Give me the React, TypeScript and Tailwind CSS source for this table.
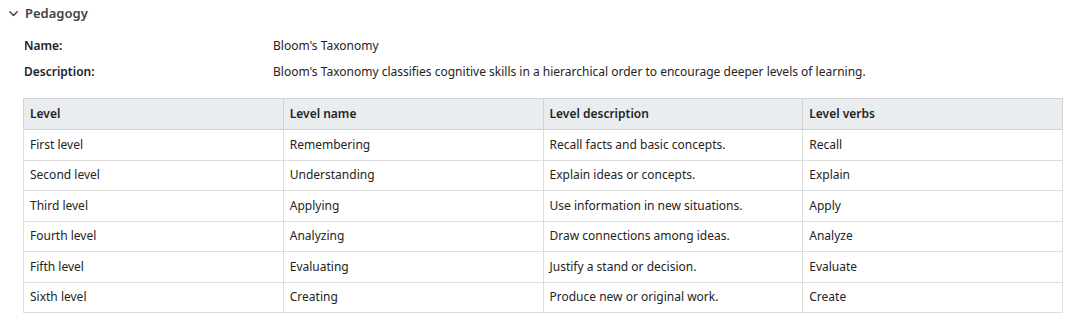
import React from "react";

type Row = {
  level: string;
  name: string;
  description: string;
  verbs: string;
};

const rows: Row[] = [
  { level: "First level", name: "Remembering", description: "Recall facts and basic concepts.", verbs: "Recall" },
  { level: "Second level", name: "Understanding", description: "Explain ideas or concepts.", verbs: "Explain" },
  { level: "Third level", name: "Applying", description: "Use information in new situations.", verbs: "Apply" },
  { level: "Fourth level", name: "Analyzing", description: "Draw connections among ideas.", verbs: "Analyze" },
  { level: "Fifth level", name: "Evaluating", description: "Justify a stand or decision.", verbs: "Evaluate" },
  { level: "Sixth level", name: "Creating", description: "Produce new or original work.", verbs: "Create" },
];

const headers = ["Level", "Level name", "Level description", "Level verbs"];

export default function App() {
  return (
    <div
      className="w-[1072px] h-[328px] bg-white text-[#242424] text-[12px]"
      style={{ fontFamily: '"Noto Sans", "Open Sans", sans-serif' }}
    >
      {/* section header */}
      <div className="flex items-center gap-[7px] pl-[9px] pt-[3px] h-[22px] box-content">
        <svg width="9" height="6" viewBox="0 0 9 6" fill="none">
          <path d="M0.8 0.8 L4.5 4.6 L8.2 0.8" stroke="#424242" strokeWidth="1.4" strokeLinecap="round" strokeLinejoin="round" />
        </svg>
        <span className="text-[13px] font-semibold text-[#424242]">Pedagogy</span>
      </div>

      {/* details */}
      <div className="ml-[24px] mt-[8px] grid grid-cols-[249px_1fr] auto-rows-[26px] items-center">
        <div className="font-semibold">Name:</div>
        <div>Bloom's Taxonomy</div>
        <div className="font-semibold">Description:</div>
        <div>
          Bloom's Taxonomy classifies cognitive skills in a hierarchical order to encourage deeper levels of learning.
        </div>
      </div>

      {/* table */}
      <table className="ml-[23px] mt-[13px] w-[1040px] border-collapse table-fixed">
        <thead>
          <tr className="h-[31px] bg-[#e9edf0]">
            {headers.map((h) => (
              <th
                key={h}
                className="border border-[#cfd3d6] px-[6px] text-left font-semibold"
              >
                {h}
              </th>
            ))}
          </tr>
        </thead>
        <tbody>
          {rows.map((r) => (
            <tr key={r.level} className="h-[30.5px]">
              <td className="border border-[#dddddd] px-[6px]">{r.level}</td>
              <td className="border border-[#dddddd] px-[6px]">{r.name}</td>
              <td className="border border-[#dddddd] px-[6px]">{r.description}</td>
              <td className="border border-[#dddddd] px-[6px]">{r.verbs}</td>
            </tr>
          ))}
        </tbody>
      </table>
    </div>
  );
}
